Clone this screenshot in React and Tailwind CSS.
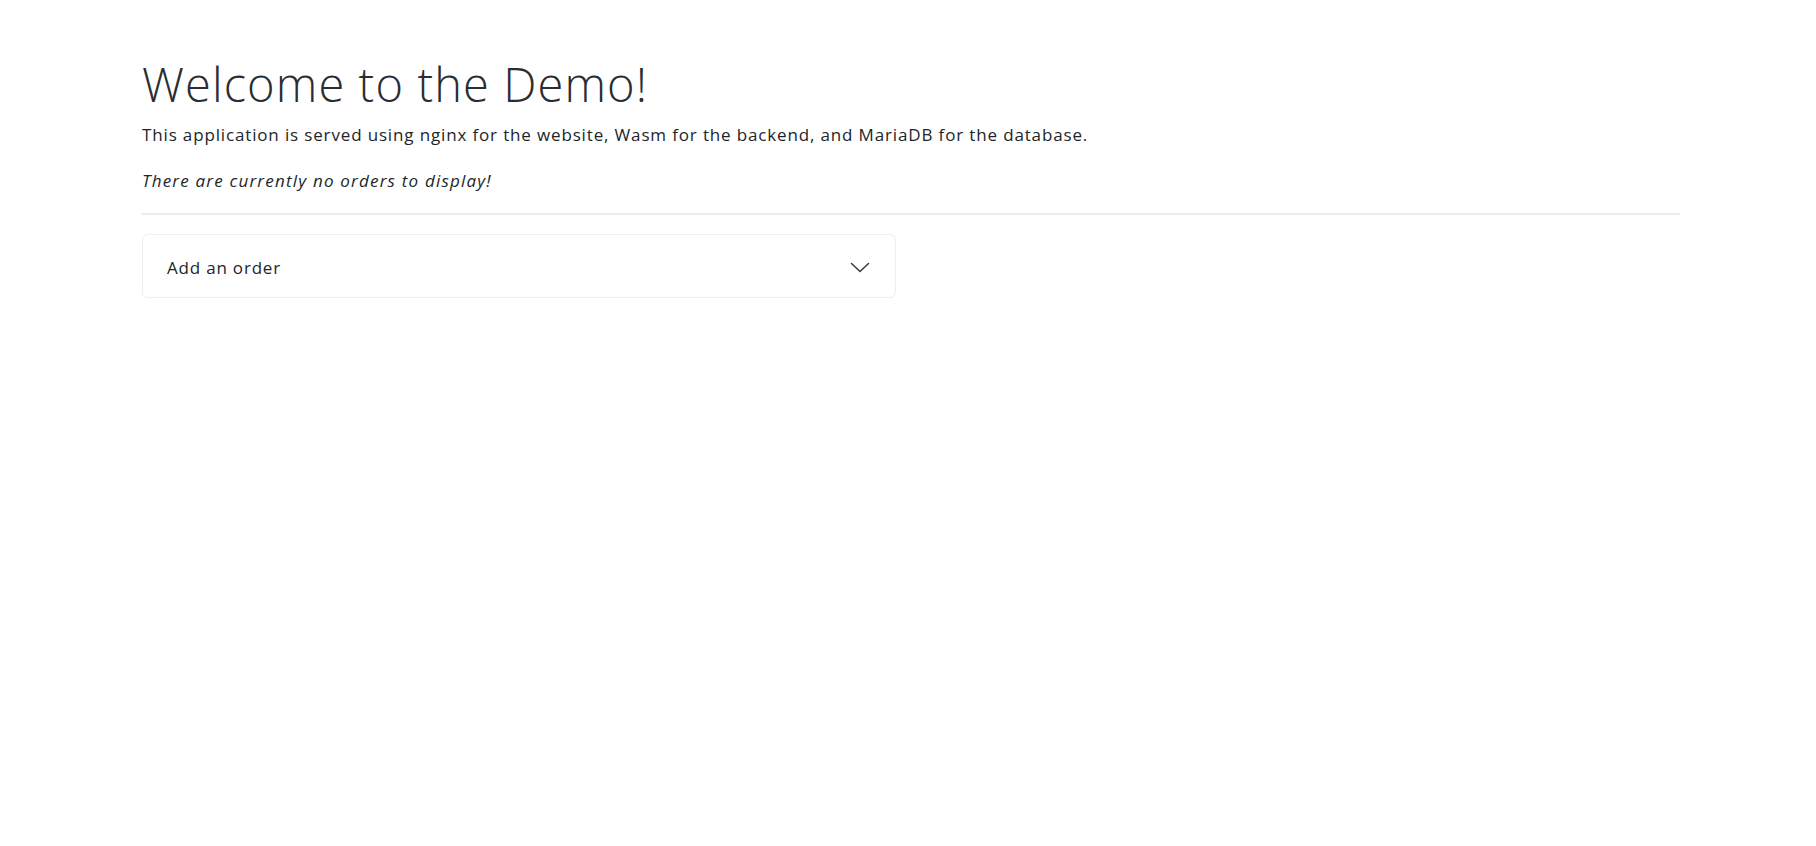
export default function App() {
  return (
    <div className="min-h-screen bg-white text-[#212529]" style={{ fontFamily: '"Open Sans", "Noto Sans", sans-serif' }}>
      <div className="ml-[142px] w-[1538px] pt-[56px]">
        <h1 className="text-[47px] font-light leading-[1.2] tracking-[1.1px] text-[#2a2d31]">Welcome to the Demo!</h1>
        <p className="text-[17px] leading-[1.5] tracking-[0.85px] mt-[10px]">
          This application is served using nginx for the website, Wasm for the backend, and MariaDB for the database.
        </p>
        <p className="text-[17px] leading-[1.5] tracking-[1.2px] italic mt-[20px]">There are currently no orders to display!</p>
        <div className="h-[2px] bg-[#ececec] mt-[20px]" />
        <div className="w-[754px] mt-[19px] border border-[#eceef0] rounded-[6px]">
          <button className="w-full h-[62px] flex items-center justify-between pl-[24px] pr-[25px] pt-[3px] text-[17px] tracking-[0.8px] text-left">
            <span>Add an order</span>
            <svg width="20" height="11" viewBox="0 0 20 11" fill="none" stroke="#343a40" strokeWidth="1.5" strokeLinecap="round" strokeLinejoin="round">
              <polyline points="1.5,1.5 10,9.5 18.5,1.5" />
            </svg>
          </button>
        </div>
      </div>
    </div>
  );
}
